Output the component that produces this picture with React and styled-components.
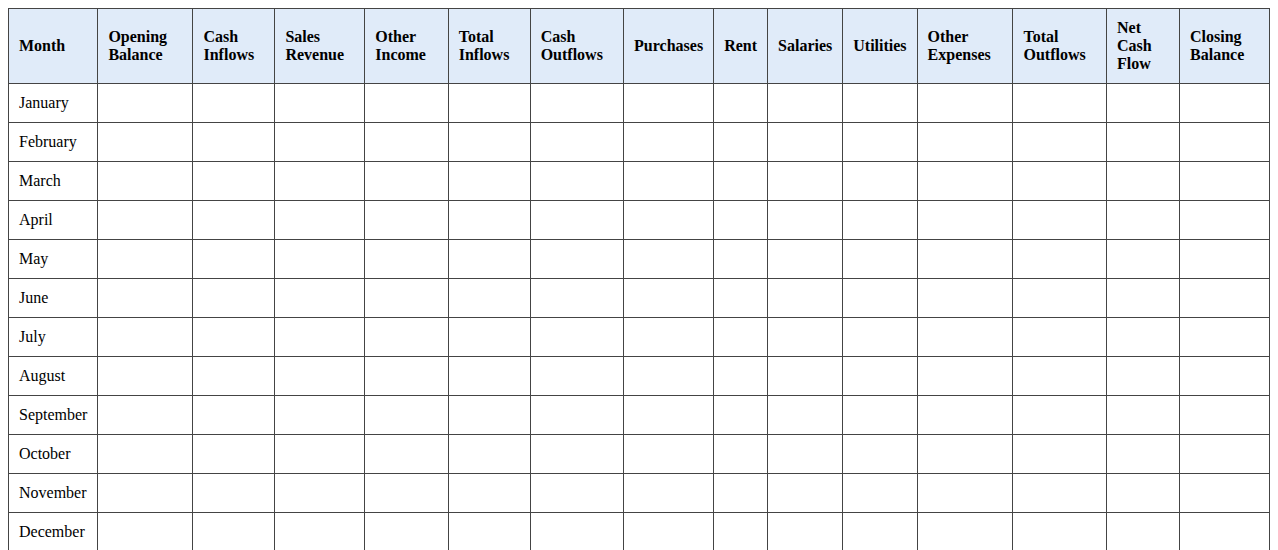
import React from "react";
import styled, { createGlobalStyle } from "styled-components";

const GlobalStyle = createGlobalStyle`
  body {
    margin: 8px;
    background: #fff;
    font-family: "Liberation Serif", "Times New Roman", serif;
    font-size: 16px;
    color: #000;
  }
`;

const columns = [
  "Month",
  "Opening Balance",
  "Cash Inflows",
  "Sales Revenue",
  "Other Income",
  "Total Inflows",
  "Cash Outflows",
  "Purchases",
  "Rent",
  "Salaries",
  "Utilities",
  "Other Expenses",
  "Total Outflows",
  "Net Cash Flow",
  "Closing Balance",
];

const months = [
  "January",
  "February",
  "March",
  "April",
  "May",
  "June",
  "July",
  "August",
  "September",
  "October",
  "November",
  "December",
];

const Table = styled.table`
  width: 100%;
  border-collapse: collapse;
`;

const HeadCell = styled.th`
  background-color: #e0ebf9;
  border: 1px solid #444;
  padding: 10px;
  text-align: left;
  font-weight: bold;
`;

const Cell = styled.td`
  border: 1px solid #444;
  padding: 10px;
  text-align: left;
  height: 18px;
`;

const App = () => {
  return (
    <>
      <GlobalStyle />
      <Table>
        <thead>
          <tr>
            {columns.map((col) => (
              <HeadCell key={col}>{col}</HeadCell>
            ))}
          </tr>
        </thead>
        <tbody>
          {months.map((month) => (
            <tr key={month}>
              <Cell>{month}</Cell>
              {columns.slice(1).map((col) => (
                <Cell key={col}></Cell>
              ))}
            </tr>
          ))}
        </tbody>
      </Table>
    </>
  );
};

export default App;
